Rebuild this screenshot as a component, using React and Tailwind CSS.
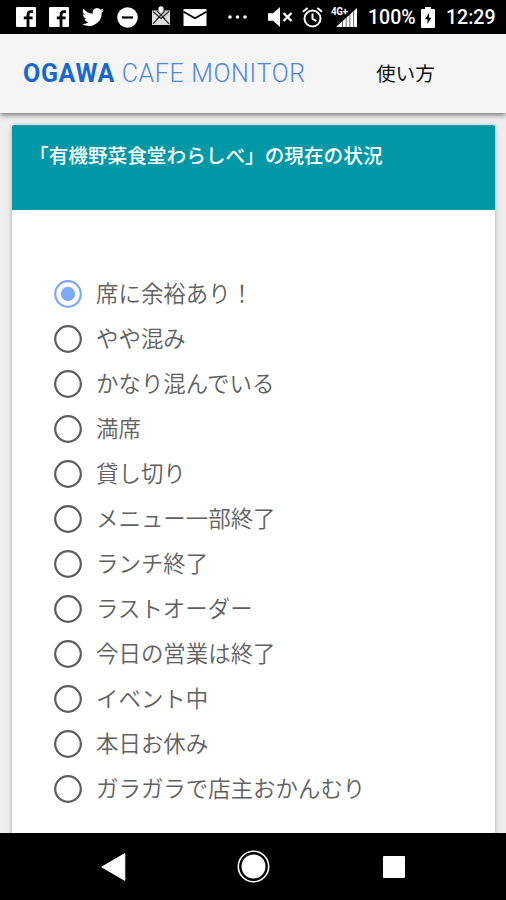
import { useState } from 'react'

const OPTIONS = [
  '席に余裕あり！',
  'やや混み',
  'かなり混んでいる',
  '満席',
  '貸し切り',
  'メニュー一部終了',
  'ランチ終了',
  'ラストオーダー',
  '今日の営業は終了',
  'イベント中',
  '本日お休み',
  'ガラガラで店主おかんむり',
]

function FacebookIcon({ className }) {
  return (
    <svg className={className} viewBox="0 0 20 20">
      <rect width="20" height="20" rx="1" fill="#fff" />
      <path fill="none" stroke="#000" strokeWidth="2.8" d="M12 20V8c0-2.3 1-3.3 3-3.3h2M7.8 10.8h8.8" />
    </svg>
  )
}

function StatusBar() {
  return (
    <header className="flex h-[34px] shrink-0 items-center bg-black pl-4 text-white">
      <FacebookIcon className="h-5 w-5 shrink-0" />
      <FacebookIcon className="ml-[13px] h-5 w-5 shrink-0" />
      <svg className="ml-[13px] h-[22px] w-[22px] shrink-0" viewBox="0 0 24 24">
        <path fill="#fff" d="M24 4.6a10 10 0 0 1-2.8.8 5 5 0 0 0 2.1-2.7 10 10 0 0 1-3.1 1.2 4.9 4.9 0 0 0-8.4 4.5A14 14 0 0 1 1.7 3.1a4.9 4.9 0 0 0 1.5 6.6 5 5 0 0 1-2.2-.6c0 2.3 1.6 4.4 3.9 4.9a5 5 0 0 1-2.2.1 4.9 4.9 0 0 0 4.6 3.4A9.9 9.9 0 0 1 0 19.5a14 14 0 0 0 21.5-12.4A10 10 0 0 0 24 4.6z" />
      </svg>
      <svg className="ml-[13px] h-[21px] w-[21px] shrink-0" viewBox="0 0 21 21">
        <circle cx="10.5" cy="10.5" r="10.3" fill="#fff" />
        <path stroke="#000" strokeWidth="2.2" d="M5 10.5h11" />
      </svg>
      <svg className="mb-[2px] ml-[13px] h-5 w-5 shrink-0" viewBox="0 0 20 20">
        <path fill="#ddd" d="M1 4.5h18V19H1z" />
        <path fill="none" stroke="#222" strokeWidth="1.1" d="m2 5.5 8 7 8-7M2 17.8l6-6.5M18 17.8l-6-6.5M6 5l8 8M14 5l-8 8" />
        <circle cx="10" cy="2.8" r="2.6" fill="#fff" />
      </svg>
      <svg className="ml-3 h-[17px] w-[24px] shrink-0" viewBox="0 0 24 17">
        <path fill="#fff" d="M.5 0h23v17H.5z" />
        <path fill="none" stroke="#000" strokeWidth="1.8" d="m.5 2.7 11.5 6.6 11.5-6.6" />
      </svg>
      <svg className="ml-[21px] h-1 w-[19px] shrink-0" viewBox="0 0 19 4">
        <g fill="#fff">
          <circle cx="2" cy="2" r="1.8" />
          <circle cx="9.5" cy="2" r="1.8" />
          <circle cx="17" cy="2" r="1.8" />
        </g>
      </svg>

      <svg className="ml-[20px] h-5 w-[26px] shrink-0" viewBox="0 0 26 20">
        <path fill="#fff" d="M1 6.2h5L13 0v20l-7-6.2H1z" />
        <path stroke="#fff" strokeWidth="2.4" d="m16.5 6 8 8M24.5 6l-8 8" />
      </svg>
      <svg className="ml-[9px] h-[21px] w-[21px] shrink-0" viewBox="0 0 21 21">
        <g fill="none" stroke="#fff" strokeWidth="2">
          <circle cx="10.5" cy="11.5" r="8" />
          <path d="m1 4.8 4.6-3.9M20 4.8 15.4.9M10.5 6.5v5.3l3.8 2.4" />
        </g>
      </svg>
      <svg className="ml-[8px] h-[22px] w-[27px] shrink-0" viewBox="0 0 27 22">
        <path fill="#fff" d="M26 2v19H5z" />
        <path stroke="#000" strokeWidth=".6" d="M11.5 14v7M15.2 11v10M18.9 8v13M22.6 5v16" />
        <text x="0" y="8.5" fill="#fff" stroke="#000" strokeWidth="1.2" paintOrder="stroke" fontSize="10" fontWeight="700" fontFamily="Roboto, sans-serif" textLength="17">4G+</text>
      </svg>
      <span className="ml-[10px] w-[48px] shrink-0 pt-[2px] font-['Roboto',sans-serif] text-[19.5px] leading-none font-medium whitespace-nowrap">100%</span>
      <svg className="ml-[5px] h-[21px] w-[14px] shrink-0" viewBox="0 0 14 21">
        <path fill="#fff" d="M4 0h6v2h3a1 1 0 0 1 1 1v17a1 1 0 0 1-1 1H1a1 1 0 0 1-1-1V3a1 1 0 0 1 1-1h3z" />
        <path fill="#000" d="M8 6 4 12.3h2.5V17l3.8-6.3H8z" />
      </svg>
      <span className="ml-[11px] shrink-0 pt-[2px] font-['Roboto',sans-serif] text-[19.5px] leading-none font-medium whitespace-nowrap">12:29</span>
    </header>
  )
}

function AppBar() {
  return (
    <nav className="relative z-10 flex h-[79px] shrink-0 items-center bg-[#f5f5f5] pl-[23px] shadow-[0_2px_5px_rgba(0,0,0,0.5)]">
      <h1 className="w-[353px] font-['Roboto',sans-serif] text-[25px] leading-none font-light tracking-[0.66px] whitespace-nowrap text-[#5084df]">
        <b className="font-bold text-[#1668d0]">OGAWA</b> CAFE MONITOR
      </h1>
      <a href="#" className="pb-[2px] font-['Noto_Sans_CJK_JP',sans-serif] text-[19.6px] leading-none whitespace-nowrap text-[#111]">使い方</a>
    </nav>
  )
}

function Radio({ label, checked, onSelect }) {
  return (
    <label className="flex h-[45px] items-center gap-[14px]">
      <input type="radio" name="status" className="sr-only" checked={checked} onChange={onSelect} />
      <svg className="h-7 w-7 shrink-0" viewBox="0 0 28 28">
        <circle cx="14" cy="14" r="12.8" fill="none" stroke={checked ? '#7baaf7' : '#5c5c5c'} strokeWidth="2.2" />
        {checked && <circle cx="14" cy="14" r="7.2" fill="#7baaf7" />}
      </svg>
      <span className="pb-[2px] font-['Noto_Sans_CJK_JP',sans-serif] text-[22.45px] leading-none font-[350] whitespace-nowrap text-[#606060]">{label}</span>
    </label>
  )
}

function NavBar() {
  return (
    <footer className="relative z-10 flex h-[67px] shrink-0 items-center bg-black pl-[101px]">
      <svg className="h-7 w-[25px]" viewBox="0 0 25 28">
        <path fill="#fff" stroke="#fff" strokeLinejoin="round" d="M.8 14 23.8.6v26.8z" />
      </svg>
      <svg className="ml-[111px] h-[33px] w-[33px]" viewBox="0 0 33 33">
        <circle cx="16.5" cy="16.5" r="15.2" fill="none" stroke="#fff" strokeWidth="1.6" />
        <circle cx="16.5" cy="16.5" r="12" fill="#fff" />
      </svg>
      <div className="ml-[113px] h-[22px] w-[22px] rounded-[1px] bg-white" />
    </footer>
  )
}

export default function App() {
  const [selected, setSelected] = useState(0)

  return (
    <div className="flex h-[900px] w-[506px] flex-col overflow-hidden bg-[#eeeeee]">
      <StatusBar />
      <AppBar />
      <main className="min-h-0 flex-1 overflow-hidden px-3 pt-3">
        <section className="mr-[-1px] h-[760px] w-[483px] rounded-[2px] bg-white shadow-[0_1px_5px_rgba(0,0,0,0.3)]">
          <div className="h-[85px] rounded-t-[2px] bg-[#0097a7] pt-[20px] pl-[28px]">
            <h2 className="ml-[-11px] font-['Noto_Sans_CJK_JP',sans-serif] text-[19.65px] leading-[20px] font-medium whitespace-nowrap text-white">
              「有機野菜食堂わらしべ」の現在の状況
            </h2>
          </div>
          <div className="pt-[61px] pl-[42px]">
            {OPTIONS.map((label, i) => (
              <Radio key={label} label={label} checked={i === selected} onSelect={() => setSelected(i)} />
            ))}
          </div>
        </section>
      </main>
      <NavBar />
    </div>
  )
}
